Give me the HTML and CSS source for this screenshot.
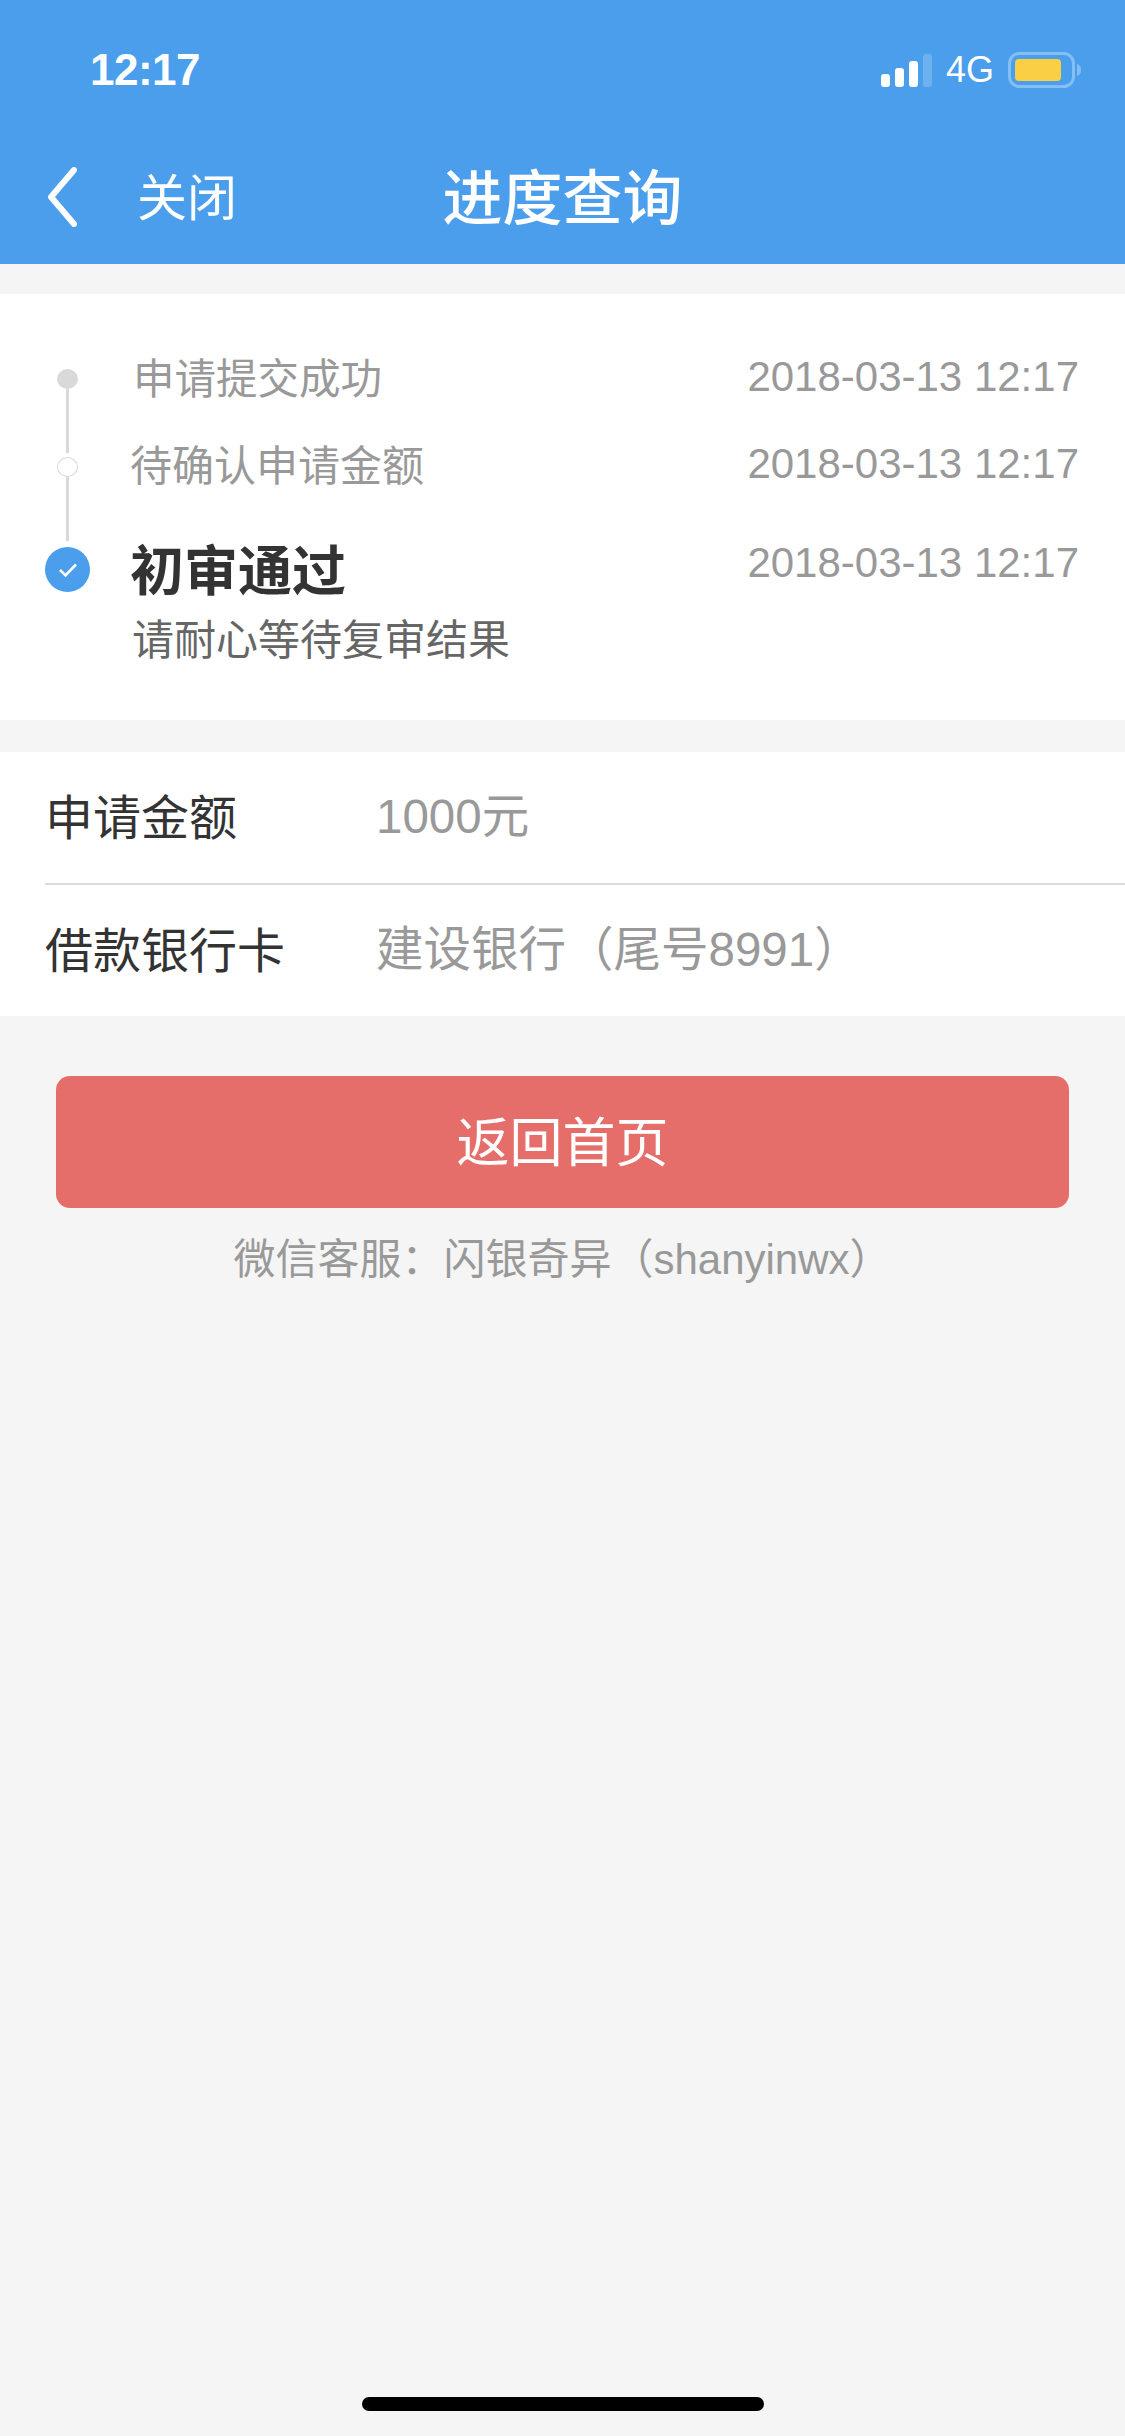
FILE: index.html
```html
<!DOCTYPE html>
<html lang="zh-CN">

<head>
    <meta charset="UTF-8">
    <meta name="viewport" content="width=device-width, initial-scale=1.0">
    <title>进度查询</title>
    <link rel="stylesheet" href="styles.css">
</head>

<body>
    <div class="page">
        <header class="header">
            <div class="status-bar">
                <span class="time">12:17</span>
                <div class="status-icons">
                    <svg class="signal" width="52" height="33" viewBox="0 0 52 33">
                        <rect x="0" y="20" width="9" height="13" rx="3" fill="#fff" />
                        <rect x="14" y="14" width="9" height="19" rx="3" fill="#fff" />
                        <rect x="28" y="7" width="9" height="26" rx="3" fill="#fff" />
                        <rect x="42" y="0" width="9" height="33" rx="3" fill="#fff" opacity="0.2" />
                    </svg>
                    <span class="network">4G</span>
                    <svg class="battery" width="74" height="36" viewBox="0 0 74 36">
                        <rect x="1.5" y="1.5" width="64" height="33" rx="10" fill="none" stroke="#83bff3" stroke-width="3" />
                        <rect x="7" y="7" width="46" height="22" rx="4" fill="#fbcf44" />
                        <path d="M69 12 C72 13 73 15 73 18 C73 21 72 23 69 24 Z" fill="#83bff3" />
                    </svg>
                </div>
            </div>
            <nav class="nav">
                <div class="nav-left">
                    <svg class="back" width="30" height="60" viewBox="0 0 30 60">
                        <path d="M27 3 L4 30 L27 57" fill="none" stroke="#fff" stroke-width="6" stroke-linecap="round" stroke-linejoin="round" />
                    </svg>
                    <span class="close">关闭</span>
                </div>
                <h1 class="title">进度查询</h1>
            </nav>
        </header>

        <section class="card timeline">
            <div class="step step-first">
                <div class="rail">
                    <span class="dot dot-filled"></span>
                    <span class="line"></span>
                </div>
                <span class="step-name name-first">申请提交成功</span>
                <span class="step-date">2018-03-13 12:17</span>
            </div>
            <div class="step step-second">
                <div class="rail">
                    <span class="dot dot-hollow"></span>
                    <span class="line"></span>
                </div>
                <span class="step-name">待确认申请金额</span>
                <span class="step-date">2018-03-13 12:17</span>
            </div>
            <div class="step step-current">
                <div class="rail">
                    <span class="dot-current">
                        <svg width="20" height="16" viewBox="0 0 20 16">
                            <path d="M2 8 L7.5 13.5 L18 2.5" fill="none" stroke="#fff" stroke-width="2.6" />
                        </svg>
                    </span>
                </div>
                <div class="step-body">
                    <span class="current-name">初审通过</span>
                    <p class="current-note">请耐心等待复审结果</p>
                </div>
                <span class="step-date">2018-03-13 12:17</span>
            </div>
        </section>

        <section class="card info">
            <div class="info-row">
                <span class="info-label">申请金额</span>
                <span class="info-value">1000元</span>
            </div>
            <div class="info-row">
                <span class="info-label">借款银行卡</span>
                <span class="info-value">建设银行（尾号8991）</span>
            </div>
        </section>

        <div class="actions">
            <button class="home-btn" type="button">返回首页</button>
            <p class="service">微信客服：闪银奇异（shanyinwx）</p>
        </div>

        <div class="home-indicator"></div>
    </div>
</body>

</html>
```

FILE: styles.css
```css
body {
    margin: 0;
    background-color: #f5f5f5;
    font-family: "Liberation Sans", "Noto Sans CJK SC", sans-serif;
}

.page {
    display: flex;
    flex-direction: column;
    height: 2436px;
    overflow: hidden;
}

.header {
    height: 264px;
    background-color: #4a9eec;
    color: #ffffff;
    flex-shrink: 0;
}

.status-bar {
    display: flex;
    justify-content: space-between;
    align-items: center;
    height: 52px;
    padding: 44px 43px 0 90px;
}

.time {
    font-size: 44px;
    font-weight: bold;
    letter-spacing: -0.5px;
}

.status-icons {
    display: flex;
    align-items: center;
}

.signal {
    margin-right: 13px;
}

.network {
    font-size: 36px;
    margin-right: 14px;
}

.nav {
    display: grid;
    grid-template-columns: 1fr auto 1fr;
    align-items: center;
    height: 60px;
    margin-top: 54px;
    padding: 0 47px;
}

.nav-left {
    grid-column: 1;
    display: flex;
    align-items: center;
    gap: 60px;
}

.back {
    margin-top: 6px;
}

.close {
    font-size: 50px;
}

.title {
    grid-column: 2;
    margin: 0;
    font-size: 60px;
    font-weight: 500;
}

.card {
    background-color: #ffffff;
}

.timeline {
    margin-top: 30px;
    padding: 75px 46px 60px 45px;
    height: 426px;
    box-sizing: border-box;
}

.step {
    display: flex;
    align-items: flex-start;
}

.step-first {
    height: 88px;
}

.step-second {
    height: 90px;
}

.rail {
    display: flex;
    flex-direction: column;
    align-items: center;
    width: 45px;
    margin-right: 40px;
    flex-shrink: 0;
}

.dot {
    display: block;
    width: 21px;
    height: 20px;
    border-radius: 50%;
    box-sizing: border-box;
}

.dot-filled {
    background-color: #d9d9d9;
}

.dot-hollow {
    background-color: #ffffff;
    border: 1px solid #d9d9d9;
}

.line {
    display: block;
    width: 3px;
    height: 64px;
    background-color: #d9d9d9;
}

.dot-current {
    display: flex;
    justify-content: center;
    align-items: center;
    width: 45px;
    height: 45px;
    border-radius: 50%;
    background-color: #4a9eec;
}

.step-name {
    flex: 1;
    font-size: 42px;
    line-height: 20px;
    color: #999999;
}

.name-first {
    padding-left: 3px;
    padding-top: 1px;
    font-size: 41.5px;
}

.step-date {
    font-size: 42px;
    line-height: 20px;
    margin-top: -2px;
    color: #999999;
}

.step-second .step-date {
    margin-top: -3px;
}

.step-body {
    flex: 1;
    padding-top: 3px;
}

.current-name {
    display: block;
    font-size: 54px;
    font-weight: bold;
    line-height: 44px;
    color: #333333;
}

.current-note {
    margin: 25px 0 0;
    padding-left: 2px;
    font-size: 42px;
    line-height: 44px;
    color: #666666;
}

.step-current .step-date {
    margin-top: 6px;
}

.info {
    margin-top: 32px;
    padding-left: 45px;
}

.info-row {
    display: flex;
    align-items: center;
    box-sizing: border-box;
    height: 131px;
    padding-bottom: 8px;
}

.info-row + .info-row {
    height: 133px;
    border-top: 2px solid #dcdcdc;
}

.info-label {
    width: 331px;
    font-size: 48px;
    color: #333333;
}

.info-value {
    margin-bottom: 2px;
    font-size: 47.5px;
    color: #999999;
}

.actions {
    padding: 60px 56px 0;
    text-align: center;
}

.home-btn {
    display: block;
    width: 100%;
    height: 132px;
    padding: 0 0 6px;
    background-color: #e56d6a;
    color: #ffffff;
    border: none;
    border-radius: 14px;
    font-family: inherit;
    font-size: 53px;
}

.service {
    margin: 24px 0 0;
    font-size: 42px;
    line-height: 56px;
    color: #999999;
}

.home-indicator {
    width: 402px;
    height: 14px;
    margin: auto auto 25px;
    border-radius: 7px;
    background-color: #000000;
}
```
